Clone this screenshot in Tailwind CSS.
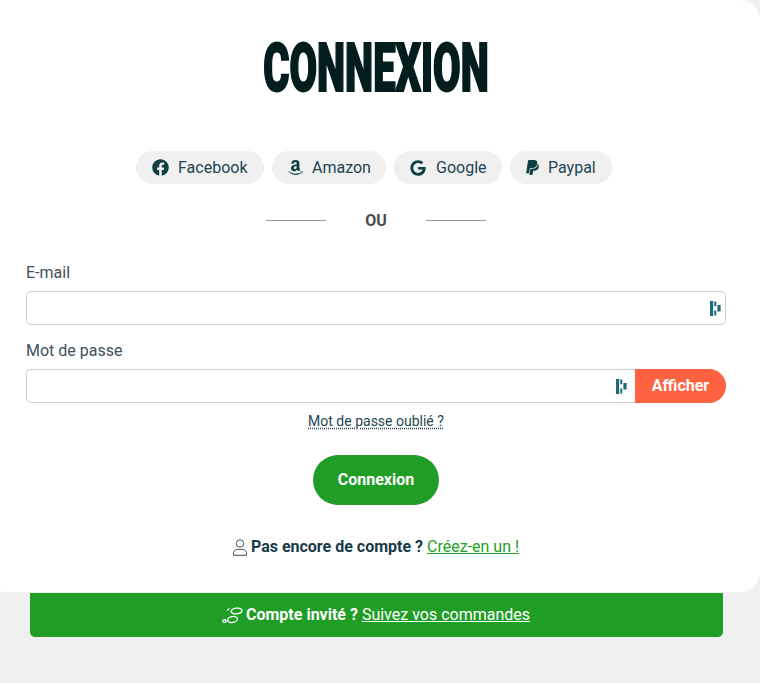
<!DOCTYPE html>
<html lang="fr">
<head>
    <meta charset="UTF-8">
    <title>Connexion</title>
    <script src="https://cdn.jsdelivr.net/npm/@tailwindcss/browser@4"></script>
</head>
<body class="bg-[#f0f0f0] font-['Roboto',sans-serif] text-[#173a47] h-[683px] overflow-hidden">

    <main class="ml-[-16px] w-[776px] h-[592px] bg-white rounded-[20px] pl-[42px] pr-[34px] flex flex-col">
        <h1 class="h-[151px] pt-[30px] text-center text-[66px] leading-[78px] font-black text-[#031d1f] scale-x-[0.605] [-webkit-text-stroke:2px_#031d1f] whitespace-nowrap">CONNEXION</h1>

        <div class="flex justify-center gap-2 pr-1 text-[16px] text-[#1d4452]">
            <a class="h-[33px] w-[128px] rounded-full bg-[#f0f0f0] flex items-center pl-4 gap-[9px]">
                <svg class="w-[17px] h-[17px]" viewBox="0 0 512 512" fill="#0f3f45"><path d="M504 256C504 119 393 8 256 8S8 119 8 256c0 123.78 90.69 226.38 209.25 245V327.69h-63V256h63v-54.64c0-62.15 37-96.48 93.67-96.48 27.14 0 55.52 4.84 55.52 4.84v61h-31.28c-30.8 0-40.41 19.12-40.41 38.73V256h68.78l-11 71.69h-57.78V501C413.31 482.38 504 379.78 504 256z"/></svg>
                Facebook</a>
            <a class="h-[33px] w-[114px] rounded-full bg-[#f0f0f0] flex items-center pl-[16px] gap-[9px]">
                <svg class="w-[15px] h-[17px]" viewBox="0 0 448 512" fill="#0f3f45"><path d="M257.2 162.7c-48.7 1.8-169.5 15.5-169.5 117.5 0 109.5 138.3 114 183.5 43.2 6.5 10.2 35.4 37.5 45.3 46.8l56.8-56S341 288.9 341 261.4V114.3C341 89 316.5 32 228.7 32 140.7 32 94 87 94 136.3l73.5 6.8c16.3-49.5 54.2-49.5 54.2-49.5 40.7-.1 35.5 29.8 35.5 69.1zm0 86.8c0 80-84.2 68-84.2 17.2 0-47.2 50.5-56.7 84.2-57.8v40.6zm136 163.5c-7.7 10-70 67-174.5 67S34.2 408.5 9.7 379c-6.8-7.7 1-11.3 5.5-8.3C88.5 415.2 203 488.5 387.7 401c7.5-3.7 13.3 2 5.5 12zm39.8 2.2c-6.5 15.8-16 26.8-21.2 31-5.5 4.5-9.5 2.7-6.5-3.8s19.3-46.5 12.7-55c-6.5-8.3-37-4.3-48-3.2-10.8 1-13 2-14-.3-2.3-5.7 21.7-15.5 37.5-17.5 15.7-1.8 41-.8 46 5.7 3.7 5.1 0 27.1-6.5 43.1z"/></svg>
                Amazon</a>
            <a class="h-[33px] w-[108px] rounded-full bg-[#f0f0f0] flex items-center pl-4 gap-[10px]">
                <svg class="w-4 h-4" viewBox="0 0 488 512" fill="#0f3f45"><path d="M488 261.8C488 403.3 391.1 504 248 504 110.8 504 0 393.2 0 256S110.8 8 248 8c66.8 0 123 24.5 166.3 64.9l-67.5 64.9C258.5 52.6 94.3 116.6 94.3 256c0 86.5 69.1 156.6 153.7 156.6 98.2 0 135-70.4 140.8-106.9H248v-85.3h236.1c2.3 12.7 3.9 24.9 3.9 41.4z"/></svg>
                Google</a>
            <a class="h-[33px] w-[102px] rounded-full bg-[#f0f0f0] flex items-center pl-4 gap-[9px]">
                <svg class="w-[13px] h-[17px]" viewBox="0 0 384 512" fill="#0f3f45"><path d="M111.4 295.9c-3.5 19.2-17.4 108.7-21.5 134-.3 1.8-1 2.5-3 2.5H12.3c-7.6 0-13.1-6.6-12.1-13.9L58.8 46.6c1.5-9.6 10.1-16.9 20-16.9 152.3 0 165.1-3.7 204 11.4 60.1 23.3 65.6 79.5 44 140.3-21.5 62.6-72.5 89.5-140.1 90.3-43.4.7-69.5-7-75.3 24.2zM357.1 152c-1.8-1.3-2.5-1.8-3 1.3-2 11.4-5.1 22.5-8.8 33.6-39.9 113.8-150.5 103.9-204.5 103.9-6.1 0-10.1 3.3-10.9 9.4-22.6 140.4-27.1 169.7-27.1 169.7-1 7.1 3.5 12.9 10.6 12.9h63.5c8.6 0 15.7-6.3 17.4-14.9.7-5.4-1.1 6.1 14.4-91.3 4.6-22 14.3-19.7 29.3-19.7 71 0 126.4-28.8 142.9-112.3 6.5-34.8 4.6-71.4-23.8-92.6z"/></svg>
                Paypal</a>
        </div>

        <div class="mt-[26px] mb-px flex items-center justify-center h-[20px] text-[16px] font-bold text-[#4a4a4a]">
            <span class="w-[60px] h-px bg-[#999]"></span>
            <span class="w-[100px] pt-px text-center">OU</span>
            <span class="w-[60px] h-px bg-[#999]"></span>
        </div>

        <label class="mt-[33px] h-[18px] leading-[18px] text-[16px] text-[#3f4f5c]">E-mail</label>
        <div class="mt-[9px] h-[34px] border border-[#ccc] rounded-[5px] flex items-center justify-end pr-[4px]">
            <svg class="w-[11px] h-[15px]" viewBox="0 0 11 15" fill="#1b6a78"><path d="M0 0h3.200v15H0zM4.300 .5h2v4.800h-2zM4.300 9.500h2v5h-2zM7.400 4h3.200v6.500H7.400z"/></svg>
        </div>

        <label class="mt-[17px] h-[18px] leading-[18px] text-[16px] text-[#3f4f5c]">Mot de passe</label>
        <div class="mt-[9px] h-[34px] flex">
            <div class="flex-1 border border-[#ccc] border-r-0 rounded-l-[5px] flex items-center justify-end pr-[8px]">
                <svg class="w-[11px] h-[15px]" viewBox="0 0 11 15" fill="#1b6a78"><path d="M0 0h3.200v15H0zM4.300 .5h2v4.800h-2zM4.300 9.500h2v5h-2zM7.400 4h3.200v6.500H7.400z"/></svg>
            </div>
            <button class="w-[91px] bg-[#ff6240] text-white font-bold text-[16px] rounded-r-[17px]">Afficher</button>
        </div>

        <a class="mt-[9px] self-center h-[18px] leading-[18px] text-[14px] text-[#1d4452] underline decoration-dotted underline-offset-2">Mot de passe oublié ?</a>

        <button class="mt-[25px] self-center w-[126px] h-[50px] rounded-[25px] bg-[#1f9d25] text-white font-bold text-[16px]">Connexion</button>

        <p class="mt-[33px] h-[18px] leading-[18px] flex items-center justify-center gap-1 text-[16px]">
            <svg class="w-[14px] h-[17px]" viewBox="0 0 14 17" fill="none" stroke="#3f4f5c" stroke-width="1"><circle cx="7" cy="4.500" r="3.700"/><path d="M.5 16.300v-2c0-2.400 2-3.900 4-3.900h5c2 0 4 1.500 4 3.900v2z"/></svg>
            <span><b class="font-bold">Pas encore de compte ?</b> <a class="text-[#1f9d25] underline">Créez-en un !</a></span>
        </p>
    </main>

    <div class="ml-[30px] mt-px pr-px w-[693px] h-[44px] bg-[#1f9d25] rounded-b-[5px] flex items-center justify-center gap-[3px] text-white text-[16px]">
        <svg class="w-[21px] h-[17px]" viewBox="0 0 21 17" fill="none" stroke="#fff" stroke-width="1.300"><ellipse cx="14.500" cy="4" rx="5.500" ry="2.800" transform="rotate(-5 14.500 4)"/><path d="M7.500 1.500c-1.200.4-2 1.100-2.200 2.200"/><ellipse cx="10.500" cy="12.500" rx="5" ry="3" transform="rotate(-8 10.500 12.500)"/><ellipse cx="2.500" cy="14" rx="1.600" ry="1.300"/></svg>
        <span><b class="font-bold">Compte invité ?</b> <a class="underline">Suivez vos commandes</a></span>
    </div>

</body>
</html>
